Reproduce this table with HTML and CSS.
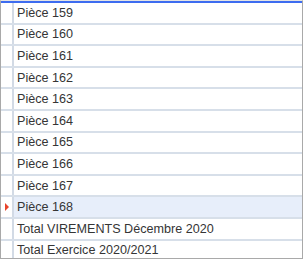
FILE: index.html
```html
<!DOCTYPE html>
<html>
<head>
<meta charset="utf-8">
<link rel="stylesheet" href="styles.css">
</head>
<body>
<div class="grid">
  <div class="topbar"></div>
  <div class="row"><div class="ind"></div><div class="cell">Pièce 159</div></div>
  <div class="row"><div class="ind"></div><div class="cell">Pièce 160</div></div>
  <div class="row"><div class="ind"></div><div class="cell">Pièce 161</div></div>
  <div class="row"><div class="ind"></div><div class="cell">Pièce 162</div></div>
  <div class="row"><div class="ind"></div><div class="cell">Pièce 163</div></div>
  <div class="row"><div class="ind"></div><div class="cell">Pièce 164</div></div>
  <div class="row"><div class="ind"></div><div class="cell">Pièce 165</div></div>
  <div class="row"><div class="ind"></div><div class="cell">Pièce 166</div></div>
  <div class="row"><div class="ind"></div><div class="cell">Pièce 167</div></div>
  <div class="row selected"><div class="ind"><span class="arrow"></span></div><div class="cell">Pièce 168</div></div>
  <div class="row"><div class="ind"></div><div class="cell">Total VIREMENTS Décembre 2020</div></div>
  <div class="row"><div class="ind"></div><div class="cell">Total Exercice 2020/2021</div></div>
</div>
</body>
</html>
```
FILE: styles.css
```css
html, body {
  margin: 0;
  padding: 0;
  background: #ffffff;
}
.grid {
  width: 303px;
  height: 259px;
  box-sizing: border-box;
  border: 1px solid #a9a9a9;
  border-top-color: #e4e4e4;
  overflow: hidden;
  display: flex;
  flex-direction: column;
  font-family: "Liberation Sans", Arial, sans-serif;
  font-size: 12.6px;
  color: #353535;
}
.topbar {
  flex: none;
  height: 2px;
  background: #3d6cf0;
}
.row {
  flex: none;
  height: 21.6px;
  box-sizing: border-box;
  border-bottom: 2px solid #d7dfe9;
  display: flex;
}
.ind {
  width: 13px;
  flex: none;
  border-right: 2px solid #d2dae5;
  background: #ffffff;
  display: flex;
  align-items: center;
  justify-content: flex-start;
  padding-left: 4px;
  box-sizing: border-box;
}
.cell {
  flex: 1;
  display: flex;
  align-items: center;
  padding-left: 3px;
  white-space: nowrap;
}
.selected .cell {
  background: #e7eefa;
}
.arrow {
  width: 0;
  height: 0;
  border-top: 4px solid transparent;
  border-bottom: 4px solid transparent;
  border-left: 4px solid #e8432a;
}
```
